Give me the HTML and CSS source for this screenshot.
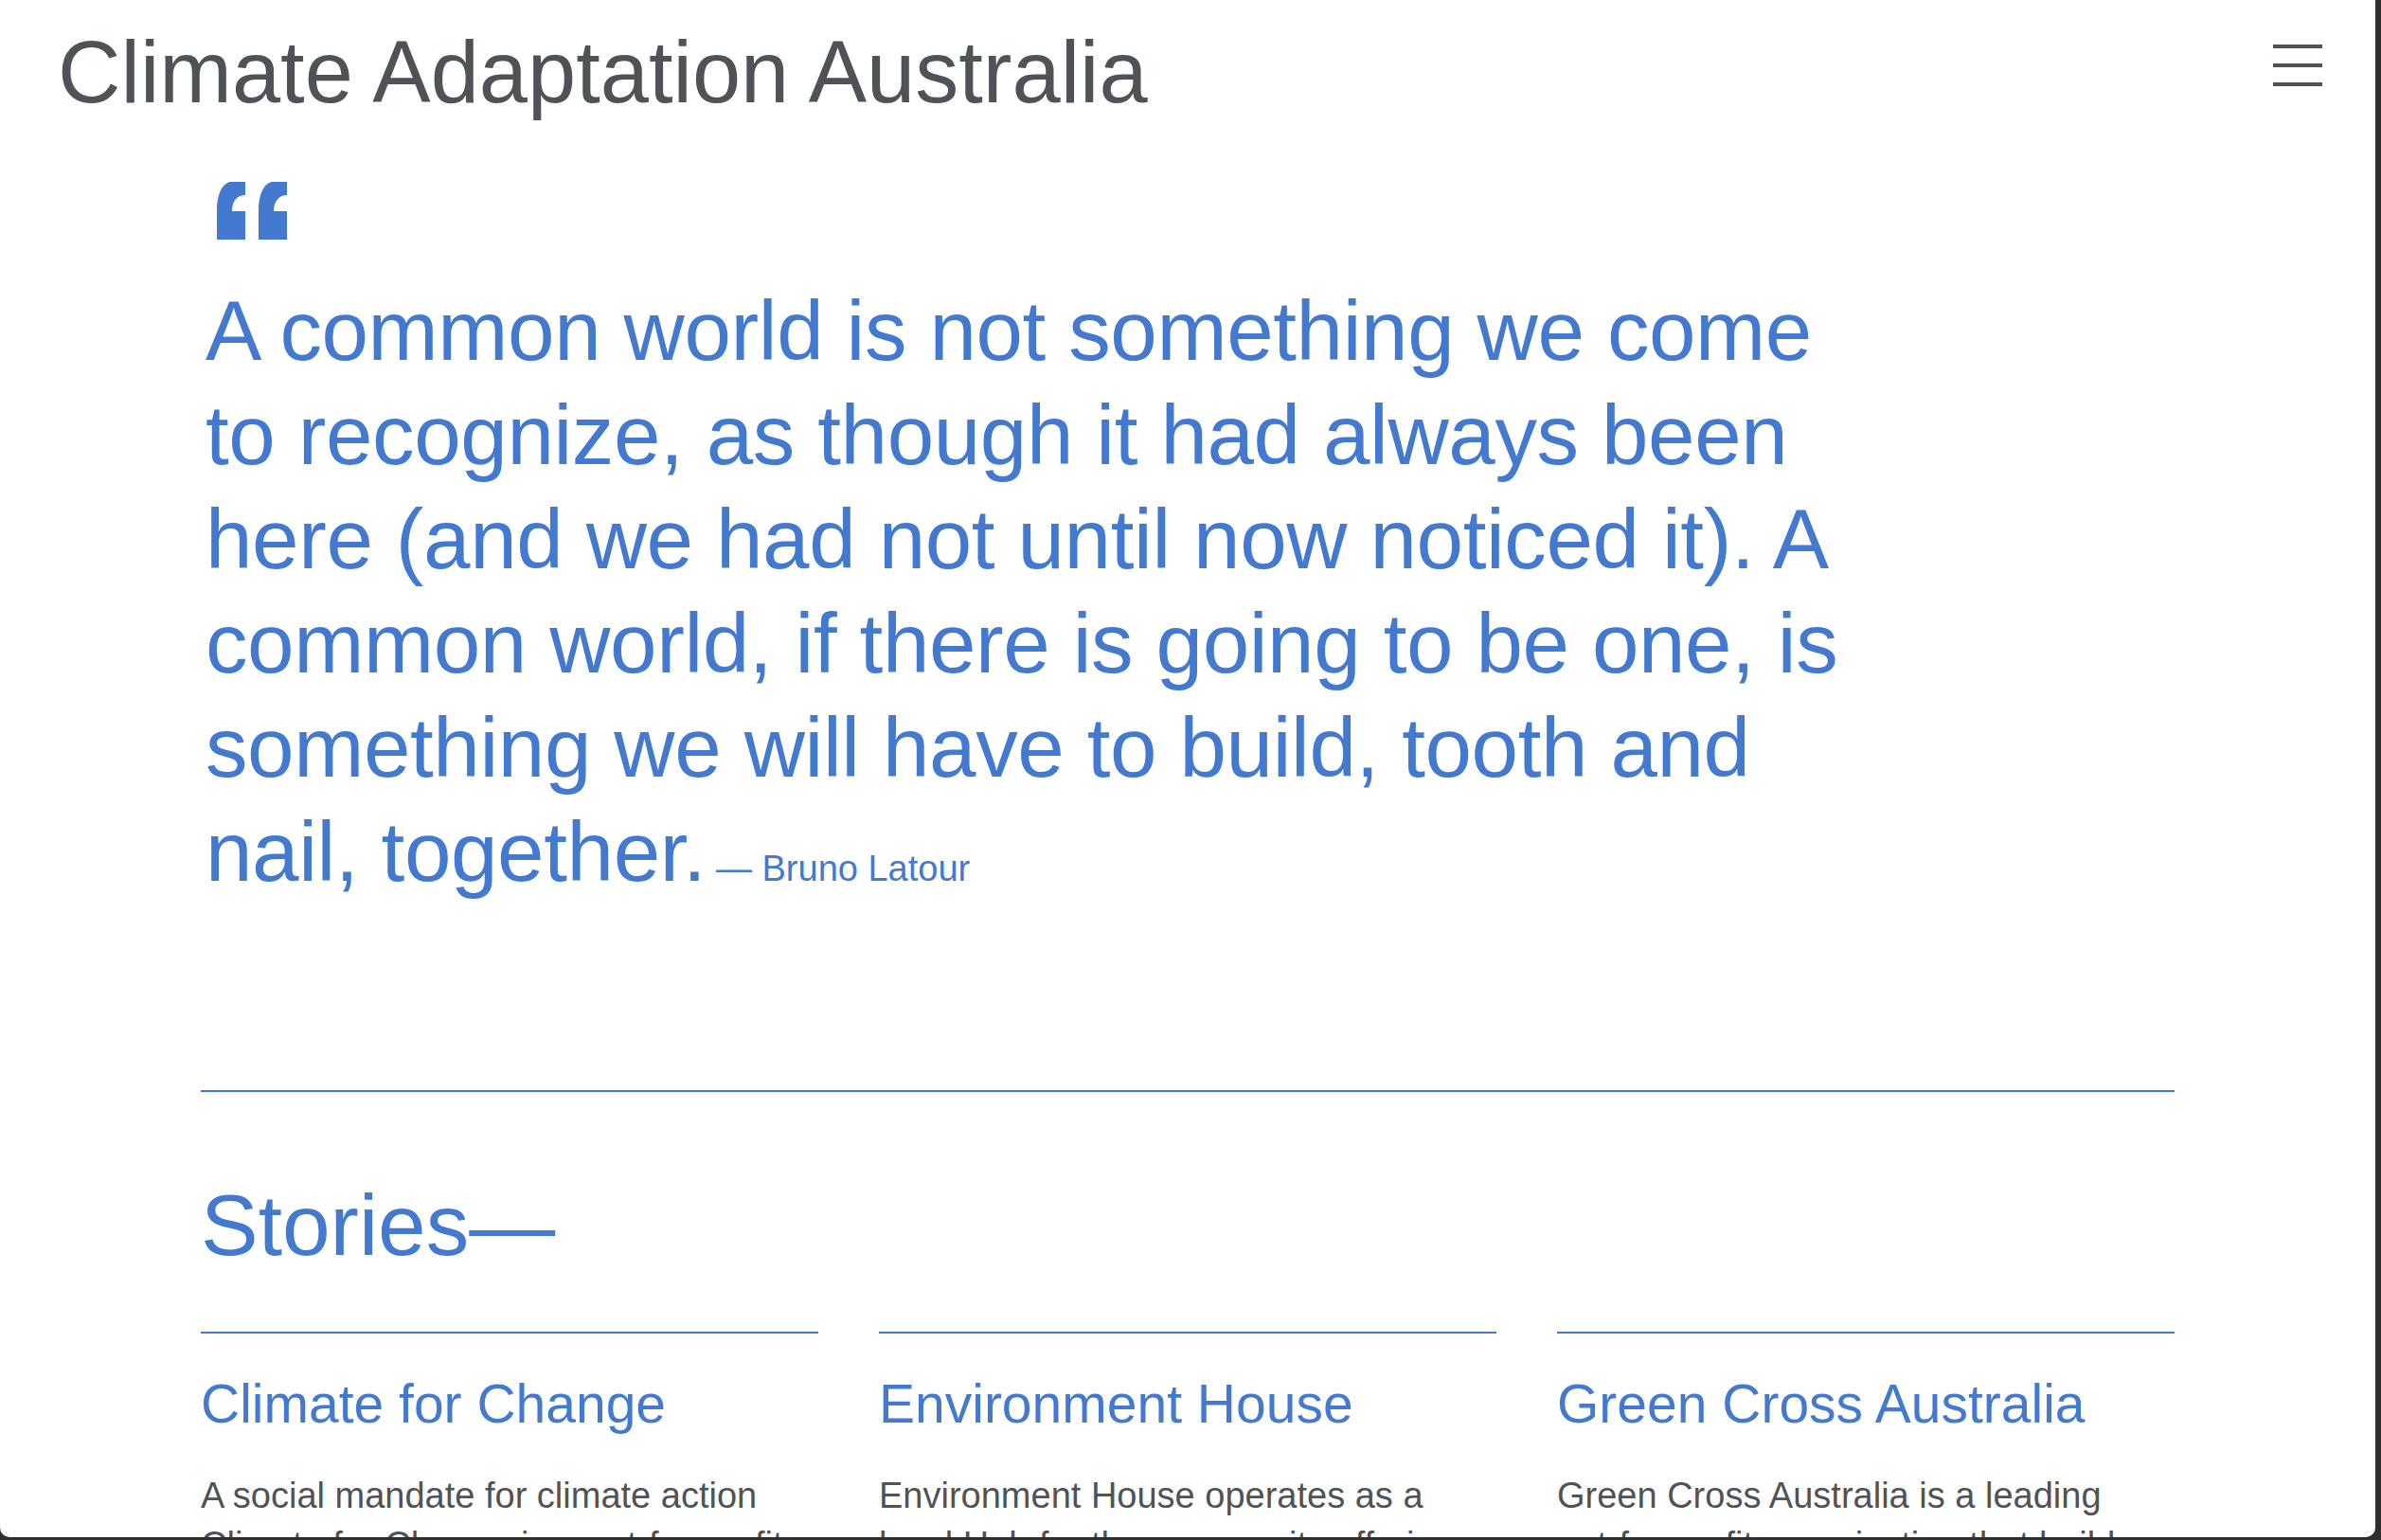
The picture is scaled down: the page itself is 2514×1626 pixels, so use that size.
FILE: index.html
```html
<!DOCTYPE html>
<html lang="en">
<head>
<meta charset="utf-8">
<title>Climate Adaptation Australia</title>
<link rel="stylesheet" href="styles.css">
</head>
<body>
<div class="window">
  <header class="site-header">
    <a class="site-title" href="#">Climate Adaptation Australia</a>
    <button class="menu-toggle" aria-label="Menu">
      <span class="bar"></span>
      <span class="bar"></span>
      <span class="bar"></span>
    </button>
  </header>

  <main class="content">
    <section class="quote-block">
      <svg class="quote-mark" width="74" height="61" viewBox="0 0 74 61" aria-hidden="true">
        <path d="M14,0 L30,0 L30,14 C22,14 16,20 16,31 L30,31 L30,61 L0,61 L0,31 C0,14 5,2 14,0 Z"/>
        <path d="M58,0 L74,0 L74,14 C66,14 60,20 60,31 L74,31 L74,61 L44,61 L44,31 C44,14 49,2 58,0 Z"/>
      </svg>
      <blockquote class="quote-text">A common world is not something we come to recognize, as though it had always been here (and we had not until now noticed it). A common world, if there is going to be one, is something we will have to build, tooth and nail, together.<cite class="quote-author"> — Bruno Latour</cite></blockquote>
    </section>

    <hr class="divider">

    <section class="stories">
      <h2 class="stories-heading">Stories—</h2>
      <div class="story-grid">
        <article class="story">
          <h3 class="story-title">Climate for Change</h3>
          <p class="story-text">A social mandate for climate action Climate for Change is a <span class="nowrap">not-for-profit</span> organisation that facilitates conversations to build a social mandate for climate action.</p>
        </article>
        <article class="story">
          <h3 class="story-title">Environment House</h3>
          <p class="story-text">Environment House operates as a local Hub for the community offering sustainability education and resources.</p>
        </article>
        <article class="story">
          <h3 class="story-title">Green Cross Australia</h3>
          <p class="story-text">Green Cross Australia is a leading <span class="nowrap">not-for-profit</span> organisation that builds community resilience to extreme weather.</p>
        </article>
      </div>
    </section>
  </main>
</div>
</body>
</html>
```

FILE: styles.css
```css
html, body {
  margin: 0;
  padding: 0;
  background: #2e2e2e;
}

body {
  font-family: "Liberation Sans", Arial, sans-serif;
  width: 2514px;
  height: 1626px;
  overflow: hidden;
}

.window {
  width: 2508px;
  height: 1623px;
  background: #ffffff;
  border-radius: 0 0 10px 10px;
  overflow: hidden;
}

.site-header {
  display: flex;
  justify-content: space-between;
  align-items: flex-start;
  padding: 0 56px 0 61px;
}

.site-title {
  margin-top: 31px;
  font-size: 92px;
  line-height: 91px;
  color: #4f5357;
  text-decoration: none;
}

.menu-toggle {
  margin-top: 47px;
  padding: 0;
  border: 0;
  background: transparent;
  display: flex;
  flex-direction: column;
  gap: 16px;
  width: 52px;
}

.menu-toggle .bar {
  display: block;
  width: 52px;
  height: 4px;
  background: #4f5357;
}

.content {
  width: 2084px;
  margin: 0 auto;
}

.quote-block {
  padding-top: 70px;
}

.quote-mark {
  display: block;
  margin-left: 17px;
  fill: #437ad0;
}

.quote-text {
  margin: 41px 0 0 5px;
  max-width: 1780px;
  font-size: 89px;
  line-height: 110px;
  color: #437ad0;
  letter-spacing: -0.4px;
}

.quote-author {
  font-style: normal;
  font-size: 38px;
  line-height: 1;
  letter-spacing: 0;
}

.divider {
  margin: 197px 0 0 0;
  border: 0;
  height: 2px;
  background: #437ad0;
}

.stories-heading {
  margin: 95px 0 0 0;
  font-size: 91px;
  line-height: 91px;
  font-weight: normal;
  color: #437ad0;
}

.story-grid {
  display: grid;
  grid-template-columns: repeat(3, 1fr);
  gap: 64px;
  margin-top: 67px;
}

.story {
  border-top: 2px solid #437ad0;
  padding-top: 40px;
}

.story-title {
  margin: 0;
  font-size: 57px;
  line-height: 68px;
  font-weight: normal;
  color: #437ad0;
}

.story-text {
  margin: 37px 0 0 0;
  font-size: 38px;
  line-height: 52px;
  color: #4f5357;
}

.nowrap {
  white-space: nowrap;
}
```
